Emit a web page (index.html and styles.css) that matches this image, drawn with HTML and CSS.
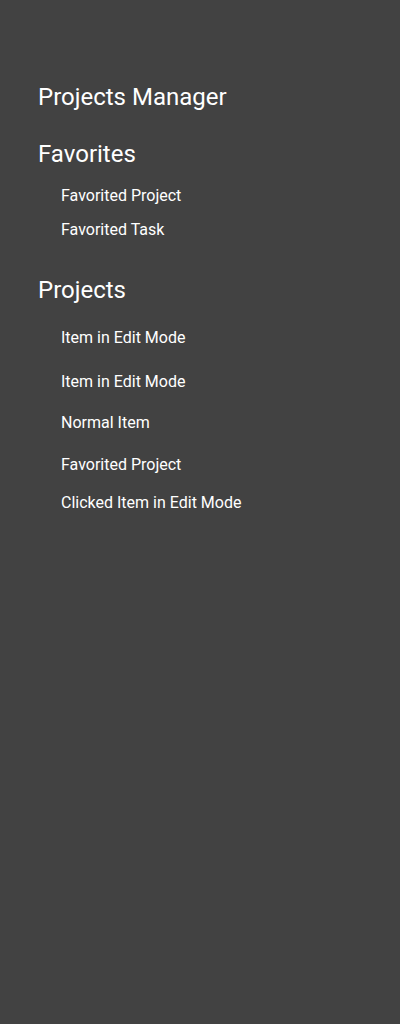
FILE: index.html
```html
<!DOCTYPE html>
<html lang="en">
<head>
<meta charset="utf-8">
<title>Projects Manager</title>
<link rel="stylesheet" href="styles.css">
</head>
<body>
<main class="page">
  <h1 class="title">Projects Manager</h1>
  <section class="favorites">
    <h2 class="heading">Favorites</h2>
    <ul class="fav-list">
      <li class="fav-item">Favorited Project</li>
      <li class="fav-item">Favorited Task</li>
    </ul>
  </section>
  <section class="projects">
    <h2 class="heading">Projects</h2>
    <ul class="proj-list">
      <li class="row row-edit-first">Item in Edit Mode</li>
      <li class="row row-edit">Item in Edit Mode</li>
      <li class="row">Normal Item</li>
      <li class="row row-fav">Favorited Project</li>
      <li class="row row-last">Clicked Item in Edit Mode</li>
    </ul>
  </section>
</main>
</body>
</html>
```
FILE: styles.css
```css
html, body {
  margin: 0;
  padding: 0;
  background: #424242;
}
body {
  font-family: Roboto, "Noto Sans", "Liberation Sans", sans-serif;
  color: #ffffff;
  min-height: 1024px;
}
.page {
  padding: 83px 0 0 38px;
  display: flex;
  flex-direction: column;
}
.title, .heading {
  margin: 0;
  font-size: 24px;
  line-height: 28px;
  font-weight: 400;
}
.favorites {
  margin-top: 29px;
}
.fav-list, .proj-list {
  list-style: none;
  margin: 0;
  padding: 0 0 0 23px;
  display: flex;
  flex-direction: column;
  font-size: 16px;
  line-height: 20px;
}
.fav-list {
  margin-top: 18px;
  gap: 14px;
}
.projects {
  margin-top: 36px;
}
.proj-list {
  margin-top: 24px;
}
.row {
  height: 42px;
}
.row-edit-first {
  height: 44px;
}
.row-edit {
  height: 41px;
}
.row-fav {
  height: 38px;
}
.row-last {
  height: 20px;
}
```
